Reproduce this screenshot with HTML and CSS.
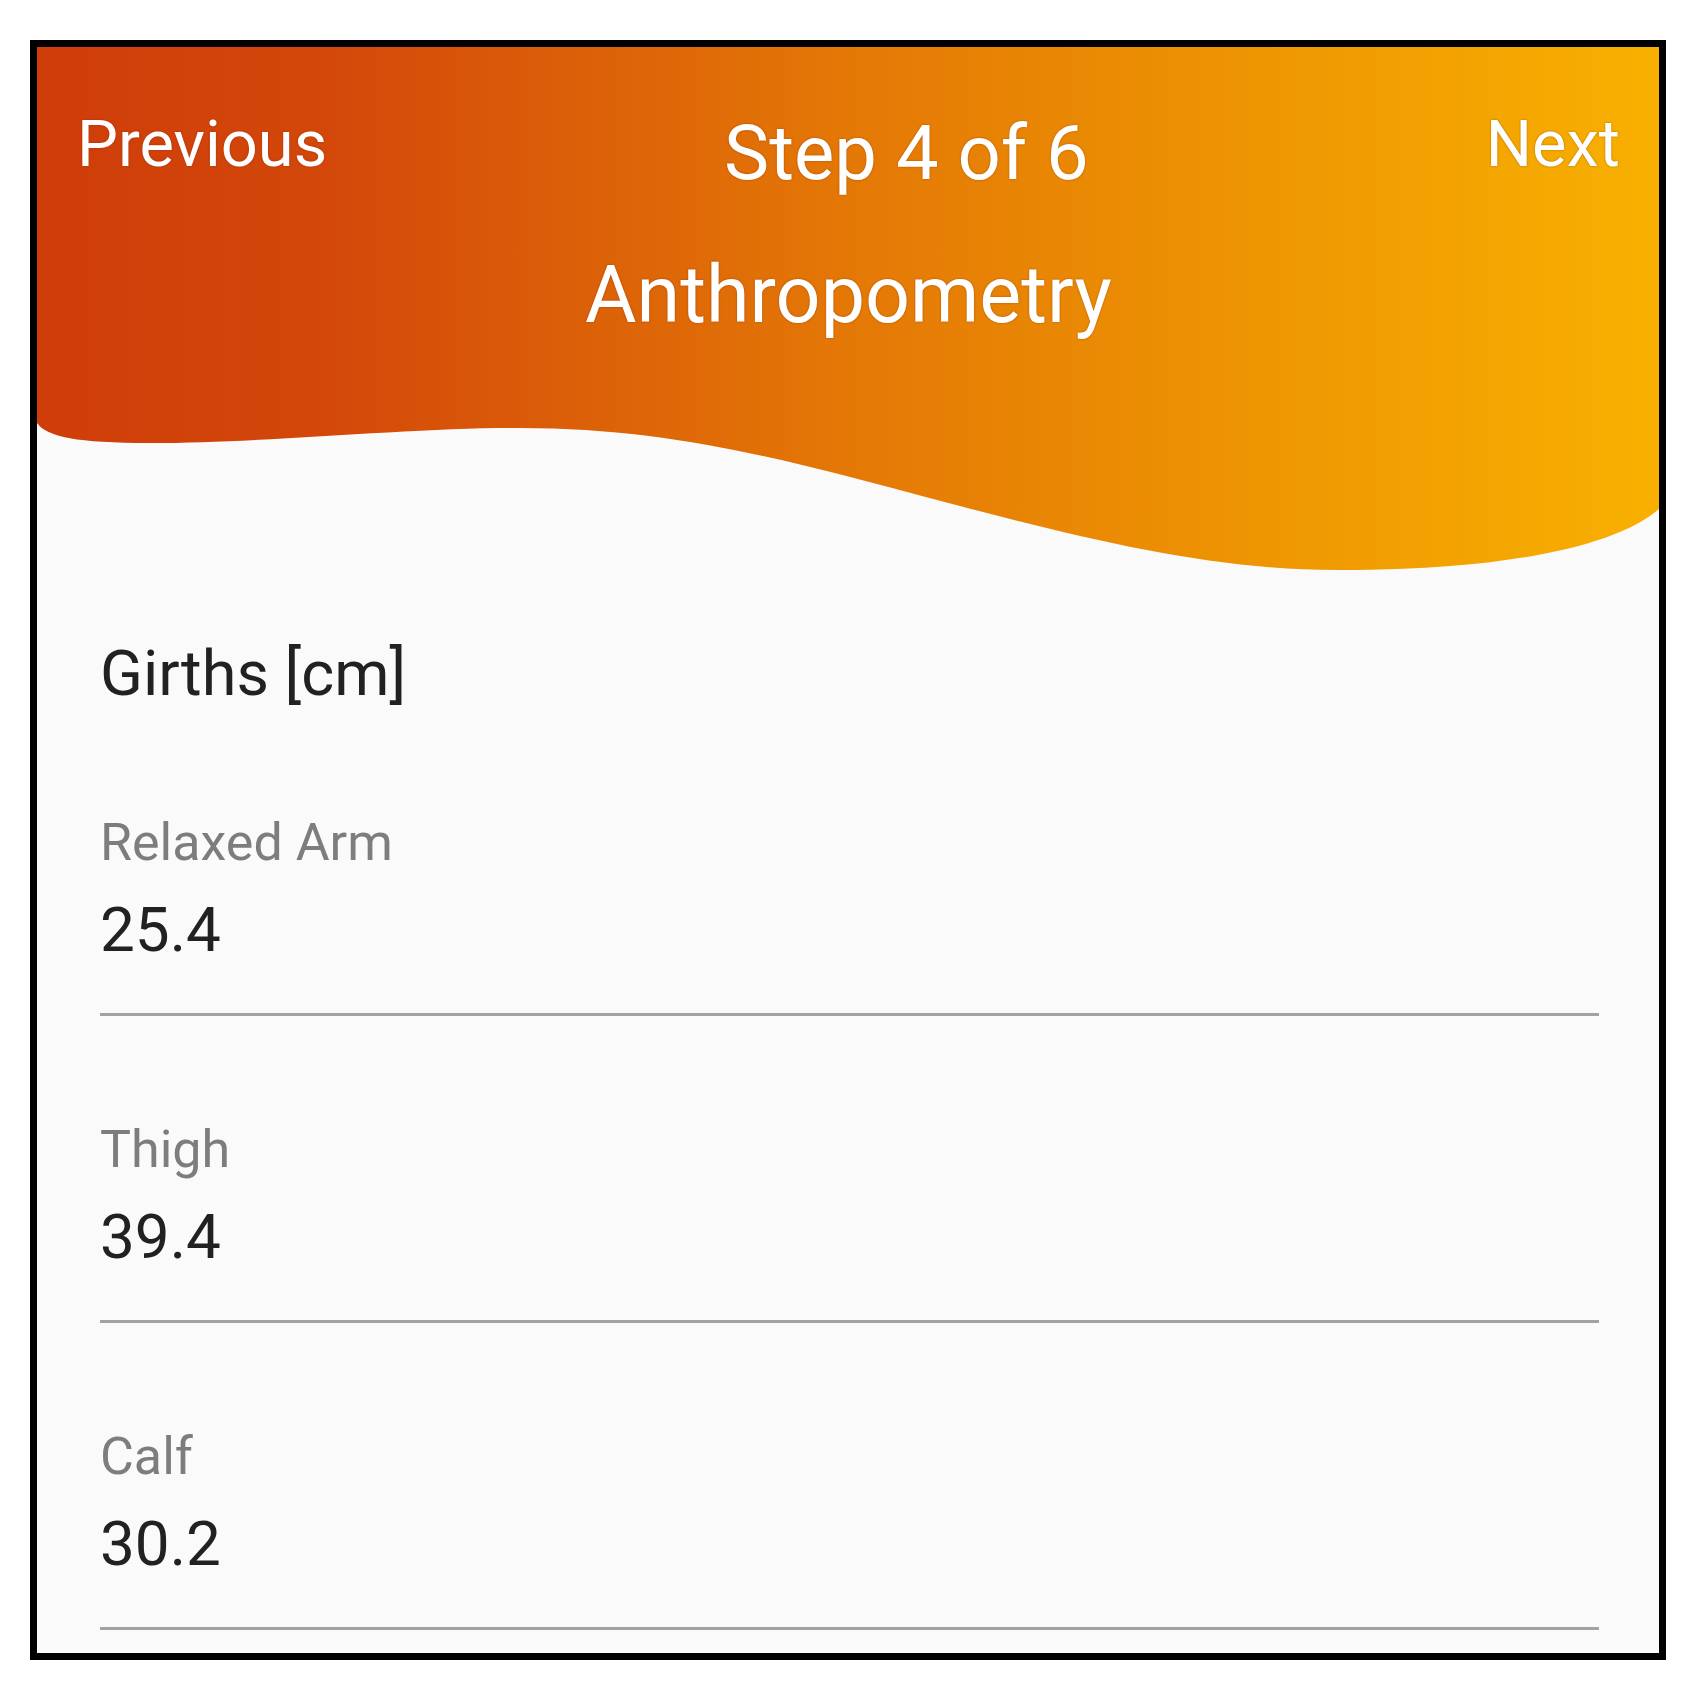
FILE: index.html
```html
<!DOCTYPE html>
<html lang="en">
<head>
    <meta charset="UTF-8">
    <meta name="viewport" content="width=device-width, initial-scale=1.0">
    <title>Anthropometry - Step 4 of 6</title>
    <link rel="stylesheet" href="styles.css">
</head>
<body>
    <div class="frame">
        <header class="wizard-header">
            <svg class="wave" viewBox="0 0 1622 523" preserveAspectRatio="none">
                <defs>
                    <linearGradient id="headerGradient" x1="0" y1="0" x2="1" y2="0">
                        <stop offset="0" stop-color="#cf3d0a"/>
                        <stop offset="0.17" stop-color="#d3470a"/>
                        <stop offset="0.5" stop-color="#e47806"/>
                        <stop offset="0.8" stop-color="#f09b02"/>
                        <stop offset="1" stop-color="#f8b000"/>
                    </linearGradient>
                </defs>
                <path fill="url(#headerGradient)" d="M0,0 V376 C10,390 40,396 113,396 C230,396 380,380 483,381 C640,381 760,416 900,453 C1040,490 1170,523 1300,523 C1450,524 1575,503 1622,462 V0 Z"/>
            </svg>
            <nav class="wizard-nav">
                <span class="nav-link">Previous</span>
                <span class="step-count">Step 4 of 6</span>
                <span class="nav-link">Next</span>
            </nav>
            <h1 class="step-title">Anthropometry</h1>
        </header>

        <main class="form">
            <h2 class="section-title">Girths [cm]</h2>

            <div class="field">
                <label class="field-label">Relaxed Arm</label>
                <div class="field-value">25.4</div>
            </div>
            <div class="field">
                <label class="field-label">Thigh</label>
                <div class="field-value">39.4</div>
            </div>
            <div class="field">
                <label class="field-label">Calf</label>
                <div class="field-value">30.2</div>
            </div>
        </main>
    </div>
</body>
</html>
```

FILE: styles.css
```css
body {
    margin: 0;
    padding: 40px 0 0 30px;
    background: #ffffff;
    font-family: Roboto, "Noto Sans", Arial, sans-serif;
}
.frame {
    width: 1636px;
    height: 1620px;
    box-sizing: border-box;
    border: 7px solid #000;
    background: #fafafa;
    overflow: hidden;
}
.wizard-header {
    position: relative;
    height: 523px;
    box-sizing: border-box;
    padding: 59px 39px 0 40px;
    color: #fff;
}
.wave {
    position: absolute;
    left: 0;
    top: 0;
    width: 100%;
    height: 100%;
    z-index: 0;
}
.wizard-nav {
    position: relative;
    display: flex;
    justify-content: space-between;
    align-items: flex-start;
}
.nav-link,
.step-count,
.step-title {
    text-shadow: 0 0 2px rgba(110, 30, 0, 0.5);
}
.nav-link {
    font-size: 65px;
}
.step-count {
    font-size: 76px;
    margin-top: 2px;
}
.step-title {
    position: relative;
    margin: 51px 0 0;
    text-align: center;
    font-size: 79px;
    font-weight: 400;
}
.form {
    padding: 67px 60px 0 63px;
}
.section-title {
    margin: 0;
    font-size: 63px;
    line-height: 74px;
    font-weight: 400;
    color: #212121;
}
.field {
    margin-top: 101px;
    padding-bottom: 46px;
    border-bottom: 3px solid #a2a2a2;
}
.field + .field {
    margin-top: 103px;
}
.field-label {
    display: block;
    font-size: 52px;
    line-height: 62px;
    color: #7d7d7d;
}
.field-value {
    margin-top: 19px;
    font-size: 62px;
    line-height: 74px;
    color: #212121;
}
```
